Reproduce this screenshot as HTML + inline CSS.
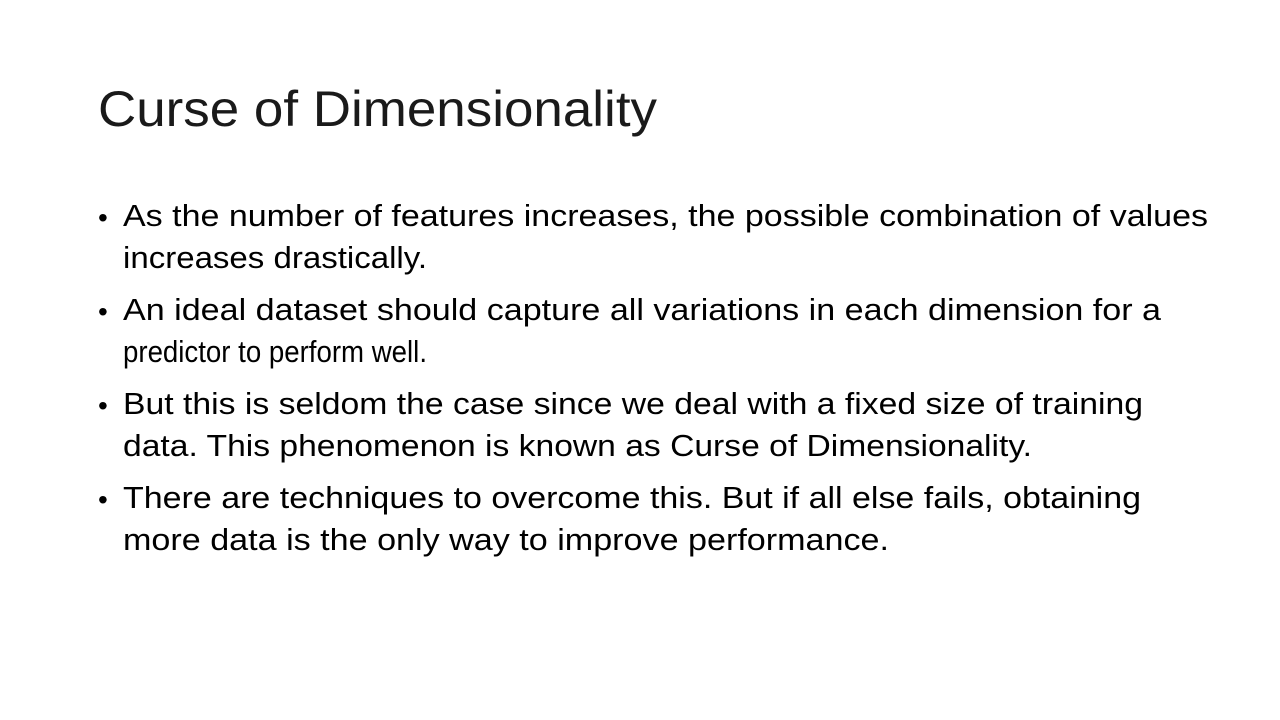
<!DOCTYPE html>
<html><head><meta charset="utf-8"><style>
html,body{margin:0;padding:0;background:#fff;}
svg{display:block;}
text{font-family:"Liberation Sans",sans-serif;fill:#000;}
</style></head><body>
<svg width="1280" height="720" viewBox="0 0 1280 720" xmlns="http://www.w3.org/2000/svg">
<rect width="1280" height="720" fill="#fff"/>
<text x="98" y="126" font-size="50" textLength="559" lengthAdjust="spacingAndGlyphs" style="fill:#1a1a1a">Curse of Dimensionality</text>
<g font-size="31">
<text x="98" y="227" font-size="28">•</text>
<text x="123" y="226" textLength="1085" lengthAdjust="spacingAndGlyphs">As the number of features increases, the possible combination of values</text>
<text x="123" y="268" textLength="304" lengthAdjust="spacingAndGlyphs">increases drastically.</text>
<text x="98" y="321" font-size="28">•</text>
<text x="123" y="320" textLength="1038" lengthAdjust="spacingAndGlyphs">An ideal dataset should capture all variations in each dimension for a</text>
<text x="123" y="362" textLength="304" lengthAdjust="spacingAndGlyphs">predictor to perform well.</text>
<text x="98" y="415" font-size="28">•</text>
<text x="123" y="414" textLength="1020" lengthAdjust="spacingAndGlyphs">But this is seldom the case since we deal with a fixed size of training</text>
<text x="123" y="456" textLength="909" lengthAdjust="spacingAndGlyphs">data. This phenomenon is known as Curse of Dimensionality.</text>
<text x="98" y="509" font-size="28">•</text>
<text x="123" y="508" textLength="1018" lengthAdjust="spacingAndGlyphs">There are techniques to overcome this. But if all else fails, obtaining</text>
<text x="123" y="550" textLength="766" lengthAdjust="spacingAndGlyphs">more data is the only way to improve performance.</text>
</g>
</svg>
</body></html>
